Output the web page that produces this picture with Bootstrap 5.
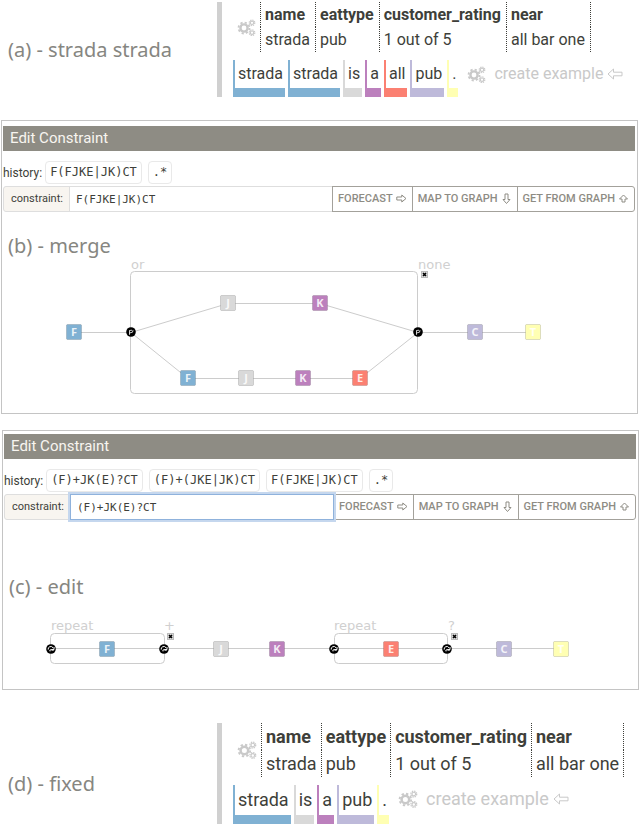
<!DOCTYPE html>
<html lang="en">
<head>
<meta charset="utf-8">
<meta name="viewport" content="width=device-width, initial-scale=1">
<title>Edit Constraint</title>
<link href="https://cdn.jsdelivr.net/npm/bootstrap@5.3.0/dist/css/bootstrap.min.css" rel="stylesheet">
<style>
body { font-family: Roboto, "Liberation Sans", sans-serif; color: #3e3f3a; background: #fff; }
.step-name { font-family: "Noto Sans", sans-serif; font-size: 20px; line-height: 24px; color: #868681; padding-left: 8px; margin: 0; }
.pane .step-name { padding-left: 6px; }
.side { width: 217px; }
.rule { border-left: 5px solid #d0d0d0; padding-left: 11px; }
.gears { width: 19px; height: 19px; color: #c9c9c9; flex: none; }
.meaning { width: auto; line-height: 25px; white-space: nowrap; }
.meaning th, .meaning td { padding: 0 5px 0 4px; border-left: 1px dotted #3e3f3a; }
.meaning tr > :last-child { border-right: 1px dotted #3e3f3a; }
.text-a { font-size: 16px; padding-top: 2px; }
.text-d { font-size: 18px; }
.text-d .meaning { line-height: 27px; }
.text-d .meaning th, .text-d .meaning td { padding-right: 4px; }
.text-d .gears { width: 20px; height: 20px; }
.words { gap: 3px; }
.tok { border-left: 2px solid; border-bottom: 9px solid; border-color: var(--c); padding: 0 2px 0 3px; line-height: 28px; white-space: pre; }
.text-d .tok { line-height: 30px; }
.kf { --c: #80b1d3; } .kj { --c: #d9d9d9; } .kk { --c: #bc80bd; }
.ke { --c: #fb8072; } .kc { --c: #bebada; } .kt { --c: #ffffb3; }
.create { color: #c9c9c9; text-decoration: none; line-height: 28px; padding-left: 6px; }
.arrow { fill: none; stroke: currentColor; stroke-width: 1; }
.pane { border: 1px solid #c4c4c4; }
.pane-b { margin: 23px 2px 0 1px; padding-top: 5px; }
.pane-c { margin: 16px 1px 0 2px; padding-top: 3px; }
.pane-in { margin: 0 2px 0 1px; }
.pane-title { background: #8e8c84; color: #f8f5f0; font-size: 15px; font-weight: 400; line-height: 25px; padding-left: 7px; margin: 0 0 10px; }
.history { font-size: 12px; height: 23px; margin-bottom: 2px; gap: 6px; }
.history span { margin-right: -3px; }
.past { font: 12px/21px "DejaVu Sans Mono", monospace; color: #3e3f3a; background: #fff; border: 1px solid #e9e9e9; border-radius: 4px; padding: 0 4px; }
.bar .input-group-text { font-size: 11px; color: #3e3f3a; background: #f8f5f0; border-color: #dedede; border-radius: 3px; padding: 0 6px 0 7px; height: 26px; }
.bar .form-control { font: 11px/24px "DejaVu Sans Mono", monospace; color: #3e3f3a; border-color: #dedede; padding: 0 6px; height: 26px; min-height: 0; }
.bar .form-control.editing { border-color: #8fb2dc; box-shadow: 0 0 0 2px #c5d7ee; z-index: 5; }
.bar .btn { font-size: 11px; font-weight: 500; line-height: 24px; color: #8e8c84; border-color: #a3a19b; border-radius: 3px; padding: 0 5px; }
.bar .btn svg { margin-left: 3px; vertical-align: -2px; }
.step-b { margin-top: 22px; }
.step-c { margin-top: 55px; }
.wire { fill: none; stroke: #ccc; }
.tag { font: 13px "DejaVu Sans", sans-serif; fill: #d0d0d0; }
.node rect { fill: var(--c); stroke: #0002; stroke-width: 1; }
.node text { font: bold 11px "Noto Sans", sans-serif; fill: #fff; fill-opacity: .85; text-anchor: middle; }
.fixed { margin-top: 33px; }
.fixed .side { padding-top: 20px; }
</style>
<script src="https://cdn.jsdelivr.net/npm/bootstrap@5.3.0/dist/js/bootstrap.bundle.min.js"></script>
</head>
<body>
<svg width="0" height="0" class="position-absolute" aria-hidden="true">
  <defs>
    <symbol id="gears" viewBox="0 0 19 19">
      <g fill="none" stroke="currentColor">
        <circle cx="7" cy="10" r="3.6" stroke-width="2.4"/>
        <circle cx="7" cy="10" r="5.5" stroke-width="1.8" stroke-dasharray="2.2 2.12"/>
        <circle cx="15" cy="4.800" r="1.700" stroke-width="1.100"/>
        <circle cx="15" cy="4.800" r="2.800" stroke-width="1.200" stroke-dasharray="1.300 .9"/>
        <circle cx="15" cy="14.700" r="1.700" stroke-width="1.100"/>
        <circle cx="15" cy="14.700" r="2.800" stroke-width="1.200" stroke-dasharray="1.300 .9"/>
      </g>
    </symbol>
    <symbol id="right" viewBox="0 0 11 11"><path class="arrow" d="M.8 4H5.800V2L10 5.500 5.800 9V7H.8z"/></symbol>
    <symbol id="down" viewBox="0 0 11 11"><path class="arrow" d="M4 1H7V6.500H9L5.500 10.500 2 6.500H4z"/></symbol>
    <symbol id="up" viewBox="0 0 11 11"><path class="arrow" d="M5.500 2L9.500 6H7V9H4V6H1.500z"/></symbol>
    <symbol id="left" viewBox="0 0 16 12"><path class="arrow" stroke-width="1.300" d="M15 4.200H6.500V1L1 6 6.500 11V7.800H15z"/></symbol>
    <symbol id="fork" viewBox="-5 -5 10 10"><circle r="4.800"/><path d="M-1.500 2.800V-1.600M-1.500 1L1.500 .2 2 -1.800M-1.500 -1.500L1 -1.800" fill="none" stroke="#fff" stroke-width=".8"/></symbol>
    <symbol id="loop" viewBox="-5 -5 10 10"><circle r="4.800"/><path d="M-2.800 .6A2.600 2.600 0 0 1 2 -1.200M3 -2V.6H.4M-1 2.400Q-1.800 .8 0 .7L2.500 1.400" fill="none" stroke="#fff" stroke-width="1"/></symbol>
    <symbol id="close" viewBox="0 0 7 7"><rect x=".5" y=".5" width="6" height="6" fill="#ddd" stroke="#bbb"/><path d="M2 2L5 5M5 2L2 5" stroke="#000" stroke-width="1.600"/></symbol>
  </defs>
</svg>

<section class="d-flex text-a">
  <div class="side d-flex align-items-center flex-shrink-0"><p class="step-name">(a) - strada strada</p></div>
  <div class="rule" id="example-a">
    <div class="d-flex align-items-center">
      <svg class="gears ms-1 me-1"><use href="#gears"/></svg>
      <table class="meaning">
        <tr><th>name</th><th>eattype</th><th>customer_rating</th><th>near</th></tr>
        <tr><td>strada</td><td>pub</td><td>1 out of 5</td><td>all bar one</td></tr>
      </table>
    </div>
    <div class="d-flex mt-2 words">
      <span class="tok kf">strada</span><span class="tok kf">strada</span><span class="tok kj">is</span><span class="tok kk">a</span><span class="tok ke">all</span><span class="tok kc">pub</span><span class="tok kt">.</span>
      <a class="create d-flex align-items-center align-self-start" href="#example-a"><svg class="gears me-2"><use href="#gears"/></svg>create example<svg class="ms-1" width="16" height="12"><use href="#left"/></svg></a>
    </div>
  </div>
</section>

<section class="pane pane-b">
  <div class="pane-in">
    <h2 class="pane-title">Edit Constraint</h2>
    <div class="history d-flex align-items-center"><span>history:</span>
      <button type="button" class="past">F(FJKE|JK)CT</button><button type="button" class="past">.*</button></div>
    <div class="input-group bar">
      <label class="input-group-text" for="rule-b">constraint:</label>
      <input class="form-control" id="rule-b" value="F(FJKE|JK)CT">
      <button type="button" class="btn btn-outline-secondary">FORECAST<svg width="11" height="11"><use href="#right"/></svg></button>
      <button type="button" class="btn btn-outline-secondary">MAP TO GRAPH<svg width="11" height="11"><use href="#down"/></svg></button>
      <button type="button" class="btn btn-outline-secondary">GET FROM GRAPH<svg width="11" height="11"><use href="#up"/></svg></button>
    </div>
  </div>
  <p class="step-name step-b">(b) - merge</p>
  <svg class="d-block w-100" viewBox="0 0 635 155" role="img" aria-label="Constraint graph">
    <g class="wire">
      <rect x="128.500" y="13.500" width="287" height="122" rx="4"/>
      <path d="M72 74.500H129L226 45.500H318L416 74.500H531M129 74.500L186 120.500H358L416 74.500"/>
    </g>
    <text class="tag" x="129" y="11">or</text><text class="tag" x="416" y="11">none</text>
    <use href="#close" x="419" y="13" width="7" height="7"/>
    <use href="#fork" x="124" y="69" width="10" height="10"/><use href="#fork" x="411" y="69" width="10" height="10"/>
    <g class="node kf" transform="translate(72 74)"><rect x="-7.500" y="-7.500" width="15" height="15" rx="1"/><text y="4">F</text></g>
    <g class="node kj" transform="translate(226 45)"><rect x="-7.500" y="-7.500" width="15" height="15" rx="1"/><text y="4">J</text></g>
    <g class="node kk" transform="translate(318 45)"><rect x="-7.500" y="-7.500" width="15" height="15" rx="1"/><text y="4">K</text></g>
    <g class="node kf" transform="translate(186 120)"><rect x="-7.500" y="-7.500" width="15" height="15" rx="1"/><text y="4">F</text></g>
    <g class="node kj" transform="translate(244 120)"><rect x="-7.500" y="-7.500" width="15" height="15" rx="1"/><text y="4">J</text></g>
    <g class="node kk" transform="translate(301 120)"><rect x="-7.500" y="-7.500" width="15" height="15" rx="1"/><text y="4">K</text></g>
    <g class="node ke" transform="translate(358 120)"><rect x="-7.500" y="-7.500" width="15" height="15" rx="1"/><text y="4">E</text></g>
    <g class="node kc" transform="translate(473 74)"><rect x="-7.500" y="-7.500" width="15" height="15" rx="1"/><text y="4">C</text></g>
    <g class="node kt" transform="translate(531 74)"><rect x="-7.500" y="-7.500" width="15" height="15" rx="1"/><text y="4">T</text></g>
  </svg>
</section>

<section class="pane pane-c">
  <div class="pane-in">
    <h2 class="pane-title">Edit Constraint</h2>
    <div class="history d-flex align-items-center"><span>history:</span>
      <button type="button" class="past">(F)+JK(E)?CT</button><button type="button" class="past">(F)+(JKE|JK)CT</button><button type="button" class="past">F(FJKE|JK)CT</button><button type="button" class="past">.*</button></div>
    <div class="input-group bar">
      <label class="input-group-text" for="rule-c">constraint:</label>
      <input class="form-control editing" id="rule-c" value="(F)+JK(E)?CT">
      <button type="button" class="btn btn-outline-secondary">FORECAST<svg width="11" height="11"><use href="#right"/></svg></button>
      <button type="button" class="btn btn-outline-secondary">MAP TO GRAPH<svg width="11" height="11"><use href="#down"/></svg></button>
      <button type="button" class="btn btn-outline-secondary">GET FROM GRAPH<svg width="11" height="11"><use href="#up"/></svg></button>
    </div>
  </div>
  <p class="step-name step-c">(c) - edit</p>
  <svg class="d-block w-100" viewBox="0 0 635 90" role="img" aria-label="Constraint graph">
    <g class="wire">
      <rect x="47.500" y="34.500" width="114" height="30" rx="4"/><rect x="331.500" y="34.500" width="113" height="30" rx="4"/>
      <path d="M48 49.500H558"/>
    </g>
    <text class="tag" x="48" y="31">repeat</text><text class="tag" x="161" y="31">+</text>
    <text class="tag" x="331" y="31">repeat</text><text class="tag" x="445" y="31">?</text>
    <use href="#close" x="164" y="34" width="7" height="7"/><use href="#close" x="448" y="34" width="7" height="7"/>
    <use href="#loop" x="43" y="45" width="10" height="10"/><use href="#loop" x="156" y="45" width="10" height="10"/>
    <use href="#loop" x="326" y="45" width="10" height="10"/><use href="#loop" x="439" y="45" width="10" height="10"/>
    <g class="node kf" transform="translate(104 50)"><rect x="-7.500" y="-7.500" width="15" height="15" rx="1"/><text y="4">F</text></g>
    <g class="node kj" transform="translate(218 50)"><rect x="-7.500" y="-7.500" width="15" height="15" rx="1"/><text y="4">J</text></g>
    <g class="node kk" transform="translate(274 50)"><rect x="-7.500" y="-7.500" width="15" height="15" rx="1"/><text y="4">K</text></g>
    <g class="node ke" transform="translate(388 50)"><rect x="-7.500" y="-7.500" width="15" height="15" rx="1"/><text y="4">E</text></g>
    <g class="node kc" transform="translate(501 50)"><rect x="-7.500" y="-7.500" width="15" height="15" rx="1"/><text y="4">C</text></g>
    <g class="node kt" transform="translate(558 50)"><rect x="-7.500" y="-7.500" width="15" height="15" rx="1"/><text y="4">T</text></g>
  </svg>
</section>

<section class="d-flex text-d fixed">
  <div class="side d-flex align-items-center flex-shrink-0"><p class="step-name">(d) - fixed</p></div>
  <div class="rule" id="example-d">
    <div class="d-flex align-items-center">
      <svg class="gears ms-1 me-1"><use href="#gears"/></svg>
      <table class="meaning">
        <tr><th>name</th><th>eattype</th><th>customer_rating</th><th>near</th></tr>
        <tr><td>strada</td><td>pub</td><td>1 out of 5</td><td>all bar one</td></tr>
      </table>
    </div>
    <div class="d-flex mt-2 words">
      <span class="tok kf">strada</span><span class="tok kj">is</span><span class="tok kk">a</span><span class="tok kc">pub</span><span class="tok kt">.</span>
      <a class="create d-flex align-items-center align-self-start" href="#example-d"><svg class="gears me-2"><use href="#gears"/></svg>create example<svg class="ms-1" width="16" height="12"><use href="#left"/></svg></a>
    </div>
  </div>
</section>
</body>
</html>
